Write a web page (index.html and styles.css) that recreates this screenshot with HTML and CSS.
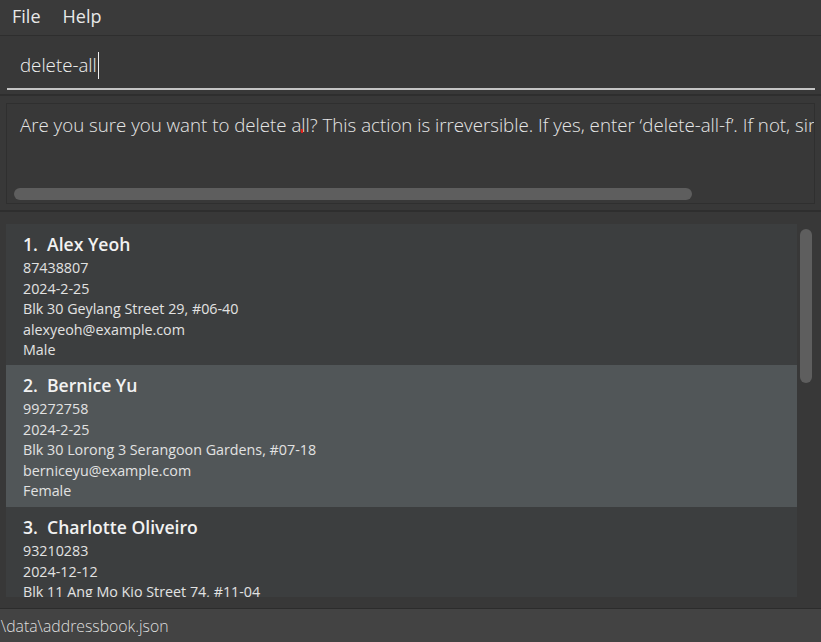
FILE: index.html
```html
<!DOCTYPE html>
<html>
<head>
<meta charset="utf-8">
<link rel="stylesheet" href="styles.css">
</head>
<body>
<div class="app">
  <div class="menubar">
    <span class="menu-item">File</span>
    <span class="menu-item">Help</span>
  </div>
  <div class="command">
    <div class="command-field">
      <span class="command-text">delete-all</span><span class="caret"></span>
    </div>
  </div>
  <div class="result">
    <div class="result-box">
      <div class="result-text">Are you sure you want to delete a<span class="redmark">l</span>l? This action is irreversible. If yes, enter ‘delete-all-f’. If not, simply enter any other command.</div>
      <div class="hscroll"><div class="hthumb"></div></div>
    </div>
  </div>
  <div class="listpane">
    <div class="list">
      <div class="card even">
        <div class="name"><span class="idx">1.</span>Alex Yeoh</div>
        <div class="line">87438807</div>
        <div class="line">2024-2-25</div>
        <div class="line">Blk 30 Geylang Street 29, #06-40</div>
        <div class="line">alexyeoh@example.com</div>
        <div class="line">Male</div>
      </div>
      <div class="card odd">
        <div class="name"><span class="idx">2.</span>Bernice Yu</div>
        <div class="line">99272758</div>
        <div class="line">2024-2-25</div>
        <div class="line">Blk 30 Lorong 3 Serangoon Gardens, #07-18</div>
        <div class="line">berniceyu@example.com</div>
        <div class="line">Female</div>
      </div>
      <div class="card even">
        <div class="name"><span class="idx">3.</span>Charlotte Oliveiro</div>
        <div class="line">93210283</div>
        <div class="line">2024-12-12</div>
        <div class="line">Blk 11 Ang Mo Kio Street 74, #11-04</div>
        <div class="line">charlotte@example.com</div>
        <div class="line">Female</div>
      </div>
    </div>
    <div class="vscroll"><div class="vthumb"></div></div>
  </div>
  <div class="statusbar">
    <span class="status-text">.\data\addressbook.json</span>
  </div>
</div>
</body>
</html>
```
FILE: styles.css
```css
html, body {
  margin: 0;
  padding: 0;
  background: #383838;
  font-family: "Open Sans", "Noto Sans", sans-serif;
}
.app {
  width: 821px;
  height: 642px;
  display: flex;
  flex-direction: column;
  overflow: hidden;
}
.menubar {
  height: 36px;
  background: #3a3a3a;
  border-bottom: 1px solid #2e2e2e;
  display: flex;
  align-items: center;
  padding-left: 12px;
  gap: 22px;
  box-sizing: border-box;
  flex: none;
}
.menu-item {
  color: #e8e8e8;
  font-size: 18px;
  line-height: 24px;
  margin-top: -4px;
}
.command {
  height: 60px;
  background: #383838;
  border-bottom: 2px solid #2e2e2e;
  padding: 0 6px 0 7px;
  box-sizing: border-box;
  flex: none;
}
.command-field {
  height: 54px;
  border-bottom: 2px solid #c4c4c4;
  display: flex;
  align-items: center;
  padding: 6px 0 0 13px;
  box-sizing: border-box;
}
.command-text {
  color: #f0f0f0;
  font-size: 18.7px;
  font-weight: 300;
  line-height: 26px;
}
.caret {
  width: 1px;
  height: 27px;
  background: #f0f0f0;
  margin-left: 1px;
}
.result {
  height: 116px;
  background: #383838;
  padding: 7px 6px 0 6px;
  box-sizing: border-box;
  border-bottom: 2px solid #2e2e2e;
  flex: none;
}
.result-box {
  height: 101px;
  border: 1px solid #2f2f2f;
  box-sizing: border-box;
  padding: 6px 0 0 13px;
  overflow: hidden;
  display: flex;
  flex-direction: column;
}
.result-text {
  color: #e6e6e6;
  font-size: 18.7px;
  font-weight: 300;
  line-height: 30px;
  white-space: nowrap;
}
.redmark {
  position: relative;
}
.redmark::after {
  content: "";
  position: absolute;
  left: 0;
  top: 17px;
  width: 2px;
  height: 4px;
  background: #e02020;
}
.hscroll {
  margin-top: auto;
  margin-bottom: 3px;
  margin-left: -6px;
  height: 12px;
}
.hthumb {
  width: 678px;
  height: 12px;
  border-radius: 6px;
  background: #5e5e5e;
}
.listpane {
  flex: 1;
  background: #383838;
  display: flex;
  padding: 12px 0 11px 6px;
  border-bottom: 1px solid #2c2c2c;
  box-sizing: border-box;
  min-height: 0;
}
.list {
  width: 791px;
  overflow: hidden;
  flex: none;
}
.card {
  height: 141px;
  padding: 7px 0 0 17px;
  box-sizing: border-box;
  color: #e2e2e2;
}
.card.odd {
  height: 142px;
  background: #515658;
}
.card.even {
  background: #3c3e3f;
}
.name {
  font-size: 17.6px;
  font-weight: 600;
  color: #f2f2f2;
  line-height: 27px;
}
.idx {
  display: inline-block;
  width: 24px;
}
.line {
  font-size: 14.3px;
  line-height: 20.5px;
}
.vscroll {
  width: 24px;
  flex: none;
  padding: 5px 0 0 3px;
  box-sizing: border-box;
}
.vthumb {
  width: 12px;
  height: 154px;
  border-radius: 6px;
  background: #5e5e5e;
}
.statusbar {
  height: 33px;
  background: #434343;
  display: flex;
  align-items: center;
  flex: none;
  overflow: hidden;
}
.status-text {
  color: #dedede;
  font-size: 15.8px;
  font-weight: 300;
  margin-left: -3px;
  white-space: nowrap;
}
```
